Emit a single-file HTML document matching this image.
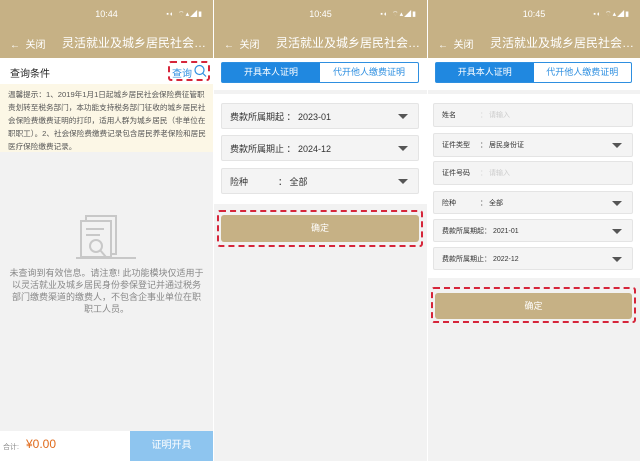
<!DOCTYPE html><html><head><meta charset="utf-8"><style>
*{margin:0;padding:0;box-sizing:border-box}
body{width:640px;height:461px;overflow:hidden;background:#fff;font-family:"Liberation Sans","Noto Sans CJK SC",sans-serif;position:relative}
.p{position:absolute;top:0;height:461px;background:#f2f2f2;overflow:hidden}
.hd{position:absolute;left:0;right:0;top:0;height:58px;background:#c6b185;color:#fff}
.tm{position:absolute;top:9px;width:100%;text-align:center;font-size:9px}
.st{position:absolute;top:9px;right:10px;font-size:7px;letter-spacing:1px}
.nv{position:absolute;top:36px;left:10px;font-size:10px;white-space:nowrap}
.nv b{position:absolute;left:52px;top:-2px;width:148px;overflow:hidden;text-overflow:ellipsis;font-size:12px;font-weight:normal}
.ab{position:absolute;background:#fff}
.tabs{position:absolute;top:62px;height:21px;border:1px solid #2e8fe0;border-radius:2px;display:flex;font-size:9px;background:#fff}
.tabs div{flex:1;text-align:center;line-height:19px;color:#2e8fe0}
.tabs div:first-child{background:#2088e0;color:#fff}
.f{position:absolute;background:#f4f4f4;border:1px solid #e4e4e4;border-radius:2px;font-size:9px;color:#333;padding-left:8px;display:flex;align-items:center}
.f i{position:absolute;right:10px;top:50%;margin-top:-2px;border-left:5px solid transparent;border-right:5px solid transparent;border-top:5px solid #555}
.s{font-size:7px}
.btn{position:absolute;background:#c6b185;color:#fff;border-radius:3px;text-align:center;font-size:9px}
.dash{position:absolute;border:2px dashed #d6253a;border-radius:3px}
</style></head><body>
<!-- panel 1 -->
<div class="p" style="left:0;width:213px">
<div class="hd"><div class="tm">10:44</div><div class="st">▪◐ ⌔▴◢▮</div><div class="nv">←&nbsp; 关闭 <b>灵活就业及城乡居民社会保险费缴费证明</b></div></div>
<div class="ab" style="top:58px;left:0;right:0;height:26px"><span style="position:absolute;left:10px;top:7px;font-size:10px;color:#222">查询条件</span>
<div class="dash" style="left:168px;top:3px;width:42px;height:20px"></div>
<span style="position:absolute;left:172px;top:7px;font-size:10px;color:#2e8fe0">查询</span>
<svg style="position:absolute;left:193px;top:6px" width="14" height="14"><circle cx="6.5" cy="6" r="4.5" fill="none" stroke="#2e8fe0" stroke-width="1.2"/><line x1="10" y1="9.5" x2="13" y2="12.5" stroke="#2e8fe0" stroke-width="1.2"/></svg></div>
<div style="position:absolute;top:84px;left:0;right:0;height:68px;background:#fcf7e6;padding:4px 6px 0 8px;font-size:7.6px;line-height:13px;color:#555">温馨提示：1、2019年1月1日起城乡居民社会保险费征管职责划转至税务部门，本功能支持税务部门征收的城乡居民社会保险费缴费证明的打印，适用人群为城乡居民（非单位在职职工）。2、社会保险费缴费记录包含居民养老保险和居民医疗保险缴费记录。</div>
<svg style="position:absolute;left:76px;top:212px" width="60" height="52" fill="none" stroke="#c8c8c8" stroke-width="2"><rect x="10" y="4" width="30" height="38"/><rect x="5" y="9" width="30" height="36" fill="#f2f2f2"/><line x1="10" y1="17" x2="28" y2="17"/><line x1="10" y1="23" x2="24" y2="23"/><circle cx="20" cy="34" r="6" fill="#f2f2f2"/><line x1="24" y1="38" x2="30" y2="45"/><line x1="0" y1="46" x2="60" y2="46"/></svg>
<div style="position:absolute;top:267px;left:8px;right:8px;text-align:center;font-size:9px;line-height:12px;color:#888">未查询到有效信息。请注意! 此功能模块仅适用于以灵活就业及城乡居民身份参保登记并通过税务部门缴费渠道的缴费人，不包含企事业单位在职职工人员。</div>
<div class="ab" style="top:431px;left:0;width:130px;height:30px"><span style="position:absolute;left:3px;top:11px;font-size:7px;color:#888">合计:</span><span style="position:absolute;left:26px;top:6px;font-size:12px;color:#e06b1c">¥0.00</span></div>
<div style="position:absolute;top:431px;left:130px;width:83px;height:30px;background:#8ec5ef;color:#fff;font-size:10px;text-align:center;line-height:30px">证明开具</div>
</div>
<!-- panel 2 -->
<div class="p" style="left:214px;width:213px">
<div class="hd"><div class="tm">10:45</div><div class="st">▪◐ ⌔▴◢▮</div><div class="nv">←&nbsp; 关闭 <b>灵活就业及城乡居民社会保险费缴费证明</b></div></div>
<div class="ab" style="top:58px;left:0;right:0;height:32px"></div>
<div class="tabs" style="left:7px;width:198px"><div>开具本人证明</div><div>代开他人缴费证明</div></div>
<div class="ab" style="top:94px;left:0;right:0;height:110px"></div>
<div class="f" style="left:7px;width:198px;top:103px;height:26px">费款所属期起 ： 2023-01<i></i></div>
<div class="f" style="left:7px;width:198px;top:135px;height:26px">费款所属期止 ： 2024-12<i></i></div>
<div class="f" style="left:7px;width:198px;top:168px;height:26px">险种&nbsp;&nbsp;&nbsp;&nbsp;&nbsp;&nbsp;&nbsp;&nbsp;&nbsp;&nbsp;&nbsp;&nbsp;： 全部<i></i></div>
<div class="btn" style="left:7px;top:215px;width:198px;height:27px;line-height:27px">确定</div>
<div class="dash" style="left:3px;top:210px;width:206px;height:37px"></div>
</div>
<!-- panel 3 -->
<div class="p" style="left:428px;width:212px">
<div class="hd"><div class="tm">10:45</div><div class="st">▪◐ ⌔▴◢▮</div><div class="nv">←&nbsp; 关闭 <b>灵活就业及城乡居民社会保险费缴费证明</b></div></div>
<div class="ab" style="top:58px;left:0;right:0;height:32px"></div>
<div class="tabs" style="left:7px;width:197px"><div>开具本人证明</div><div>代开他人缴费证明</div></div>
<div class="ab" style="top:94px;left:0;right:0;height:184px"></div>
<div class="f s" style="left:5px;width:200px;top:103px;height:24px">姓名<span style="position:absolute;left:46px;color:#ccc">： 请输入</span></div>
<div class="f s" style="left:5px;width:200px;top:133px;height:24px">证件类型<span style="position:absolute;left:46px">： 居民身份证</span><i></i></div>
<div class="f s" style="left:5px;width:200px;top:161px;height:24px">证件号码<span style="position:absolute;left:46px;color:#ccc">： 请输入</span></div>
<div class="f s" style="left:5px;width:200px;top:191px;height:23px">险种<span style="position:absolute;left:46px">： 全部</span><i></i></div>
<div class="f s" style="left:5px;width:200px;top:219px;height:23px">费款所属期起： 2021-01<i></i></div>
<div class="f s" style="left:5px;width:200px;top:247px;height:23px">费款所属期止： 2022-12<i></i></div>
<div class="btn" style="left:7px;top:293px;width:197px;height:26px;line-height:26px">确定</div>
<div class="dash" style="left:3px;top:287px;width:205px;height:36px"></div>
</div>
</body></html>
